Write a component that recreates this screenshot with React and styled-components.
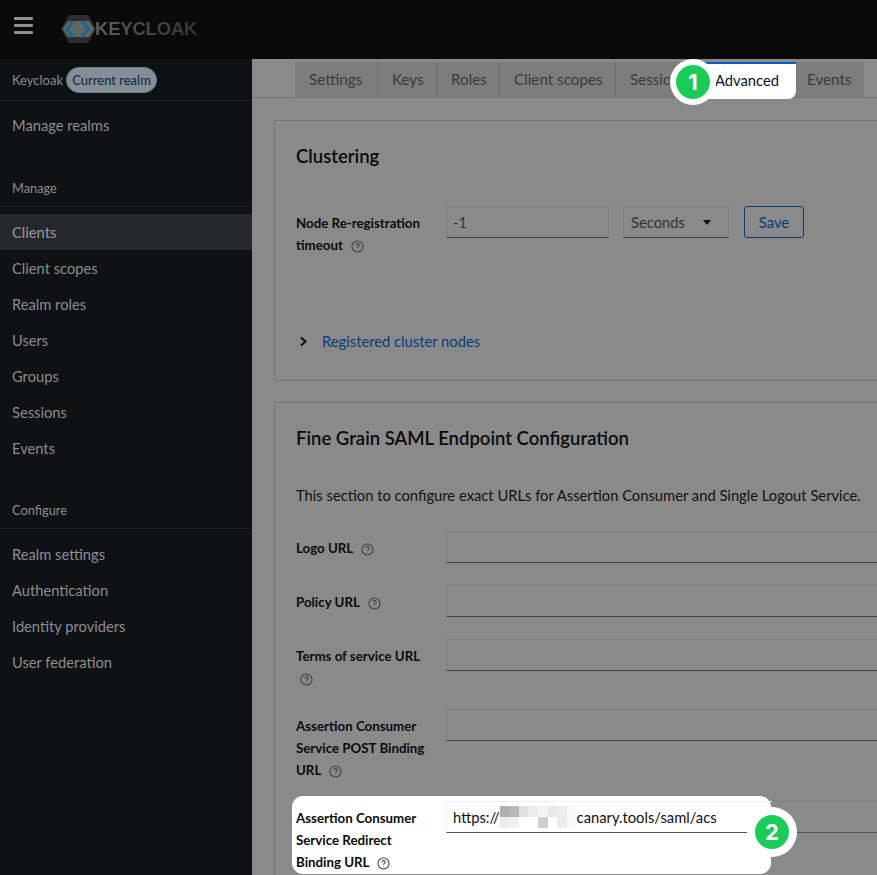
import React from "react";
import styled, { createGlobalStyle } from "styled-components";

const Global = createGlobalStyle`
  html, body { margin: 0; padding: 0; height: 100%; overflow: hidden; background: #8a8a8a; }
  #root { height: 100%; }
  * { box-sizing: border-box; }
`;
const FONT = `"Lato", "Noto Sans", sans-serif`;

const Page = styled.div`
  width: 877px; height: 875px; overflow: hidden; position: relative;
  display: grid; grid-template-rows: 59px 1fr; grid-template-columns: 252px 1fr;
  font-family: ${FONT}; font-size: 14.75px; color: #0d0d0d; background: #8a8a8a;
`;
const Header = styled.header`
  grid-column: 1 / 3; background: #0a0a0a; display: flex; align-items: center; padding-left: 14px;
`;
const Burger = styled.div`
  width: 19px; height: 17px; display: flex; flex-direction: column; justify-content: space-between;
  margin-top: -8px; margin-right: 28px;
  span { display: block; height: 3px; border-radius: 1px; background: #8f8f8f; }
`;
const Logo = styled.div`
  display: flex; align-items: center; margin-top: -1px;
`;
const LogoText = styled.span`
  font-family: "Liberation Sans", sans-serif; font-weight: 700; font-size: 18.5px; letter-spacing: -0.2px; margin-left: -1px;
  background: linear-gradient(to right, #5c5c5c, #343434); -webkit-background-clip: text; background-clip: text; color: transparent;
`;
const Sidebar = styled.aside`
  background: #0f1114; color: #8d8d8d; display: flex; flex-direction: column;
`;
const RealmRow = styled.div`
  height: 42px; display: flex; align-items: center; padding-left: 12px; gap: 3px; border-bottom: 1px solid #1d1f22; font-size: 13px;
`;
const Pill = styled.span`
  background: #848e99; color: #10243a; border-radius: 13px; height: 26px; line-height: 24px; width: 91px; text-align: center; font-size: 13px; border: 1px solid #6d7c88; white-space: nowrap;
`;
const NavItem = styled.div`
  height: 36px; line-height: 36px; padding-left: 12px; font-size: 14.7px;
  background: ${p => (p.$active ? "#25272a" : "transparent")};
  color: ${p => (p.$active ? "#9a9a9a" : "#8d8d8d")};
`;
const SectionHead = styled.div`
  height: 36px; margin-top: 27px; padding: 0 0 9px 12px; display: flex; align-items: flex-end;
  font-size: 12.8px; line-height: 17px; border-bottom: 1px solid #1d1f22; margin-bottom: 7px;
`;
const ManageLink = styled(NavItem)` margin-top: 7px; line-height: 35px; `;
const Main = styled.main`
  overflow: hidden; min-width: 0; display: flex; flex-direction: column; background: #8a8a8a;
`;
const TabBar = styled.nav`
  height: 39px; padding: 3px 0 0 43px; border-bottom: 1px solid #747474; display: flex; align-items: flex-start;
  width: 100%; flex: none; position: relative;
`;
const Tab = styled.div`
  height: 35px; line-height: 35px; padding-left: ${p => p.$pad || 14}px; width: ${p => p.$w}px; background: #7d7d7d; color: #3a3a3a; font-size: 15.2px;
  border-right: 1px solid ${p => (p.$last ? "transparent" : "#6e6e6e")}; flex: none; overflow: hidden; white-space: nowrap;
`;
const ActiveTab = styled.div`
  position: relative; height: 37px; width: 96px; flex: none; background: #fff; color: #111; line-height: 32px; padding-left: 15px;
  border-radius: 0 0 8px 8px; border-top: 2px solid #0b5cc0; white-space: nowrap;
`;
const Badge = styled.div`
  position: absolute; width: ${p => p.$size}px; height: ${p => p.$size}px; border-radius: 50%; background: #fff; display: flex; align-items: center; justify-content: center;
  left: ${p => p.$left}px; top: ${p => p.$top}px; z-index: 3;
  span { width: 34px; height: 34px; border-radius: 50%; background: #1bcb57; color: #fff; font-family: "Inter", sans-serif; font-weight: 700; font-size: 22px; line-height: 34px; text-align: center; display: block; }
`;
const Content = styled.div`
  padding: 22px 0 0 22px; width: 700px; display: flex; flex-direction: column; gap: 21px; flex: none;
`;
const Card = styled.section`
  border: 1px solid #747474; padding: 22px 21px 0; height: ${p => p.$h};
`;
const Title = styled.h2`
  margin: 0; font-size: 18.5px; line-height: 26px; font-weight: 600; color: #0a0a0a;
`;
const Row = styled.div`
  display: grid; grid-template-columns: 150px 520px; align-items: start; position: relative;
  margin-bottom: 22px; margin-top: ${p => p.$mt || 0}px;
`;
const FieldLabel = styled.label`
  font-weight: 700; font-size: 13.3px; line-height: 22px; padding-top: 6px; padding-right: 8px; margin-bottom: -2px; color: #0a0a0a; position: relative; z-index: 1;
`;
const Help = styled.svg.attrs({ viewBox: "0 0 14 14" })`
  width: 13px; height: 13px; margin-left: ${p => p.$ml ?? 5}px; vertical-align: -2.5px;
  display: ${p => (p.$block ? "block" : "inline-block")}; margin-top: ${p => (p.$block ? 6 : 0)}px; margin-bottom: ${p => (p.$block ? 3 : 0)}px;
  fill: none; stroke: #3d3d3d; stroke-width: 1.1;
`;
const HelpIcon = props => (
  <Help {...props}>
    <circle cx="7" cy="7" r="6" />
    <path d="M5.3 5.6a1.75 1.75 0 1 1 2.6 1.5c-.6.35-.9.6-.9 1.2" />
    <circle cx="7" cy="10.2" r=".5" fill="#3d3d3d" stroke="none" />
  </Help>
);
const Input = styled.div`
  height: 32px; border: 1px solid #7f7f7f; border-bottom: 1px solid #444;
  padding-left: 6px; color: #333;
  width: ${p => p.$w || "auto"}; position: relative; z-index: 1; flex: none; display: flex; align-items: center;
`;
const LitInput = styled(Input)`
  border: none; border-left: 1px solid #ececec; border-bottom: 1px solid #555; padding-left: 6px; color: #111;
  background: linear-gradient(to right, #ececec 325px, #7f7f7f 325px) top / 100% 1px no-repeat;
`;
const NodeRow = styled.div`
  display: flex; align-items: flex-start; margin-top: 37px; height: 97px;
`;
const NodeLabel = styled(FieldLabel)` width: 150px; flex: none; `;
const Select = styled(Input)`
  width: 106px; margin-left: 14px; justify-content: space-between; padding-right: 17px; padding-left: 7px;
`;
const Caret = styled.i`
  width: 0; height: 0; border-left: 4.5px solid transparent; border-right: 4.5px solid transparent; border-top: 5px solid #0e0e0e;
`;
const SaveButton = styled.div`
  width: 60px; height: 32px; margin-left: 15px; border: 1px solid #063c7c; border-radius: 3px; text-align: center; line-height: 30px; color: #063c7c;
`;
const Expander = styled.div`
  display: flex; align-items: center; color: #063c7c; gap: 14px; height: 22px; margin-top: 27px;
  svg { width: 9px; height: 11px; fill: none; stroke: #0a0a0a; stroke-width: 2; margin-left: 3px; }
`;
const Desc = styled.p`
  margin: 33px 0 0; line-height: 22px; color: #111; white-space: nowrap;
`;
const Highlight = styled.div`
  position: absolute; left: -4px; top: -5px; width: 479px; height: 78px; background: #fff; border-radius: 11px; z-index: 0;
`;
const Blur = styled.span`
  width: 77px; height: 22px; flex: none; display: grid; grid-template-columns: repeat(8, 1fr); grid-template-rows: 1fr 1fr;
  i { display: block; }
`;
const blurColors = ["#b0b0b0","#b8b8b8","#e0e0e0","#ececec","#f4f4f4","#e8e8e8","#ededed","#fafafa","#ececec","#f0f0f0","#fff","#fff","#cfcfcf","#fff","#ececec","#fafafa"];

const tabs = [["Settings", 83], ["Keys", 59], ["Roles", 63], ["Client scopes", 116], ["Sessions", 84]];
const manage = ["Client scopes", "Realm roles", "Users", "Groups", "Sessions", "Events"];
const configure = ["Realm settings", "Authentication", "Identity providers", "User federation"];

export default function App() {
  return (
    <Page>
      <Global />
      <Header>
        <Burger><span /><span /><span /></Burger>
        <Logo>
          <svg width="35" height="28" viewBox="0 0 35 28">
            <path d="M0 14 8 0h19l8 14-8 14H8z" fill="#2d2d2d" />
            <path d="M1.500 14 7 6h21l5.500 8-5.500 8H7z" fill="#646464" />
            <path d="M12 6 6 14l6 8M21 6l6 8-6 8" fill="none" stroke="#17688a" strokeWidth="3.500" />
          </svg>
          <LogoText>KEYCLOAK</LogoText>
        </Logo>
      </Header>
      <Sidebar>
        <RealmRow>Keycloak <Pill>Current realm</Pill></RealmRow>
        <ManageLink>Manage realms</ManageLink>
        <SectionHead>Manage</SectionHead>
        <NavItem $active>Clients</NavItem>
        {manage.map(m => <NavItem key={m}>{m}</NavItem>)}
        <SectionHead>Configure</SectionHead>
        {configure.map(m => <NavItem key={m}>{m}</NavItem>)}
      </Sidebar>
      <Main>
        <TabBar>
          {tabs.map(([t, w]) => <Tab key={t} $w={w}>{t}</Tab>)}
          <ActiveTab>
            Advanced
            <Badge $size={46} $left={-30} $top={-5}><span>1</span></Badge>
          </ActiveTab>
          <Tab $w={68} $pad={11} $last>Events</Tab>
        </TabBar>
        <Content>
          <Card $h="261px">
            <Title>Clustering</Title>
            <NodeRow>
              <NodeLabel>Node Re-registration timeout <HelpIcon /></NodeLabel>
              <Input $w="163px">-1</Input>
              <Select>Seconds <Caret /></Select>
              <SaveButton>Save</SaveButton>
            </NodeRow>
            <Expander>
              <svg viewBox="0 0 9 11"><path d="M2 1.500 6.500 5.500 2 9.500" /></svg>
              Registered cluster nodes
            </Expander>
          </Card>
          <Card $h="600px">
            <Title>Fine Grain SAML Endpoint Configuration</Title>
            <Desc>This section to configure exact URLs for Assertion Consumer and Single Logout Service.</Desc>
            <Row $mt={25}><FieldLabel>Logo URL <HelpIcon /></FieldLabel><Input /></Row>
            <Row><FieldLabel>Policy URL <HelpIcon /></FieldLabel><Input /></Row>
            <Row><FieldLabel>Terms of service URL <HelpIcon $block $ml={4} /></FieldLabel><Input /></Row>
            <Row><FieldLabel>Assertion Consumer Service POST Binding URL <HelpIcon /></FieldLabel><Input /></Row>
            <Row>
              <Highlight />
              <FieldLabel>Assertion Consumer Service Redirect Binding URL <HelpIcon /></FieldLabel>
              <LitInput>
                https://<Blur>{blurColors.map((c, i) => <i key={i} style={{ background: c }} />)}</Blur>canary.tools/saml/acs
              </LitInput>
              <Badge $size={50} $left={451} $top={6}><span>2</span></Badge>
            </Row>
          </Card>
        </Content>
      </Main>
    </Page>
  );
}
